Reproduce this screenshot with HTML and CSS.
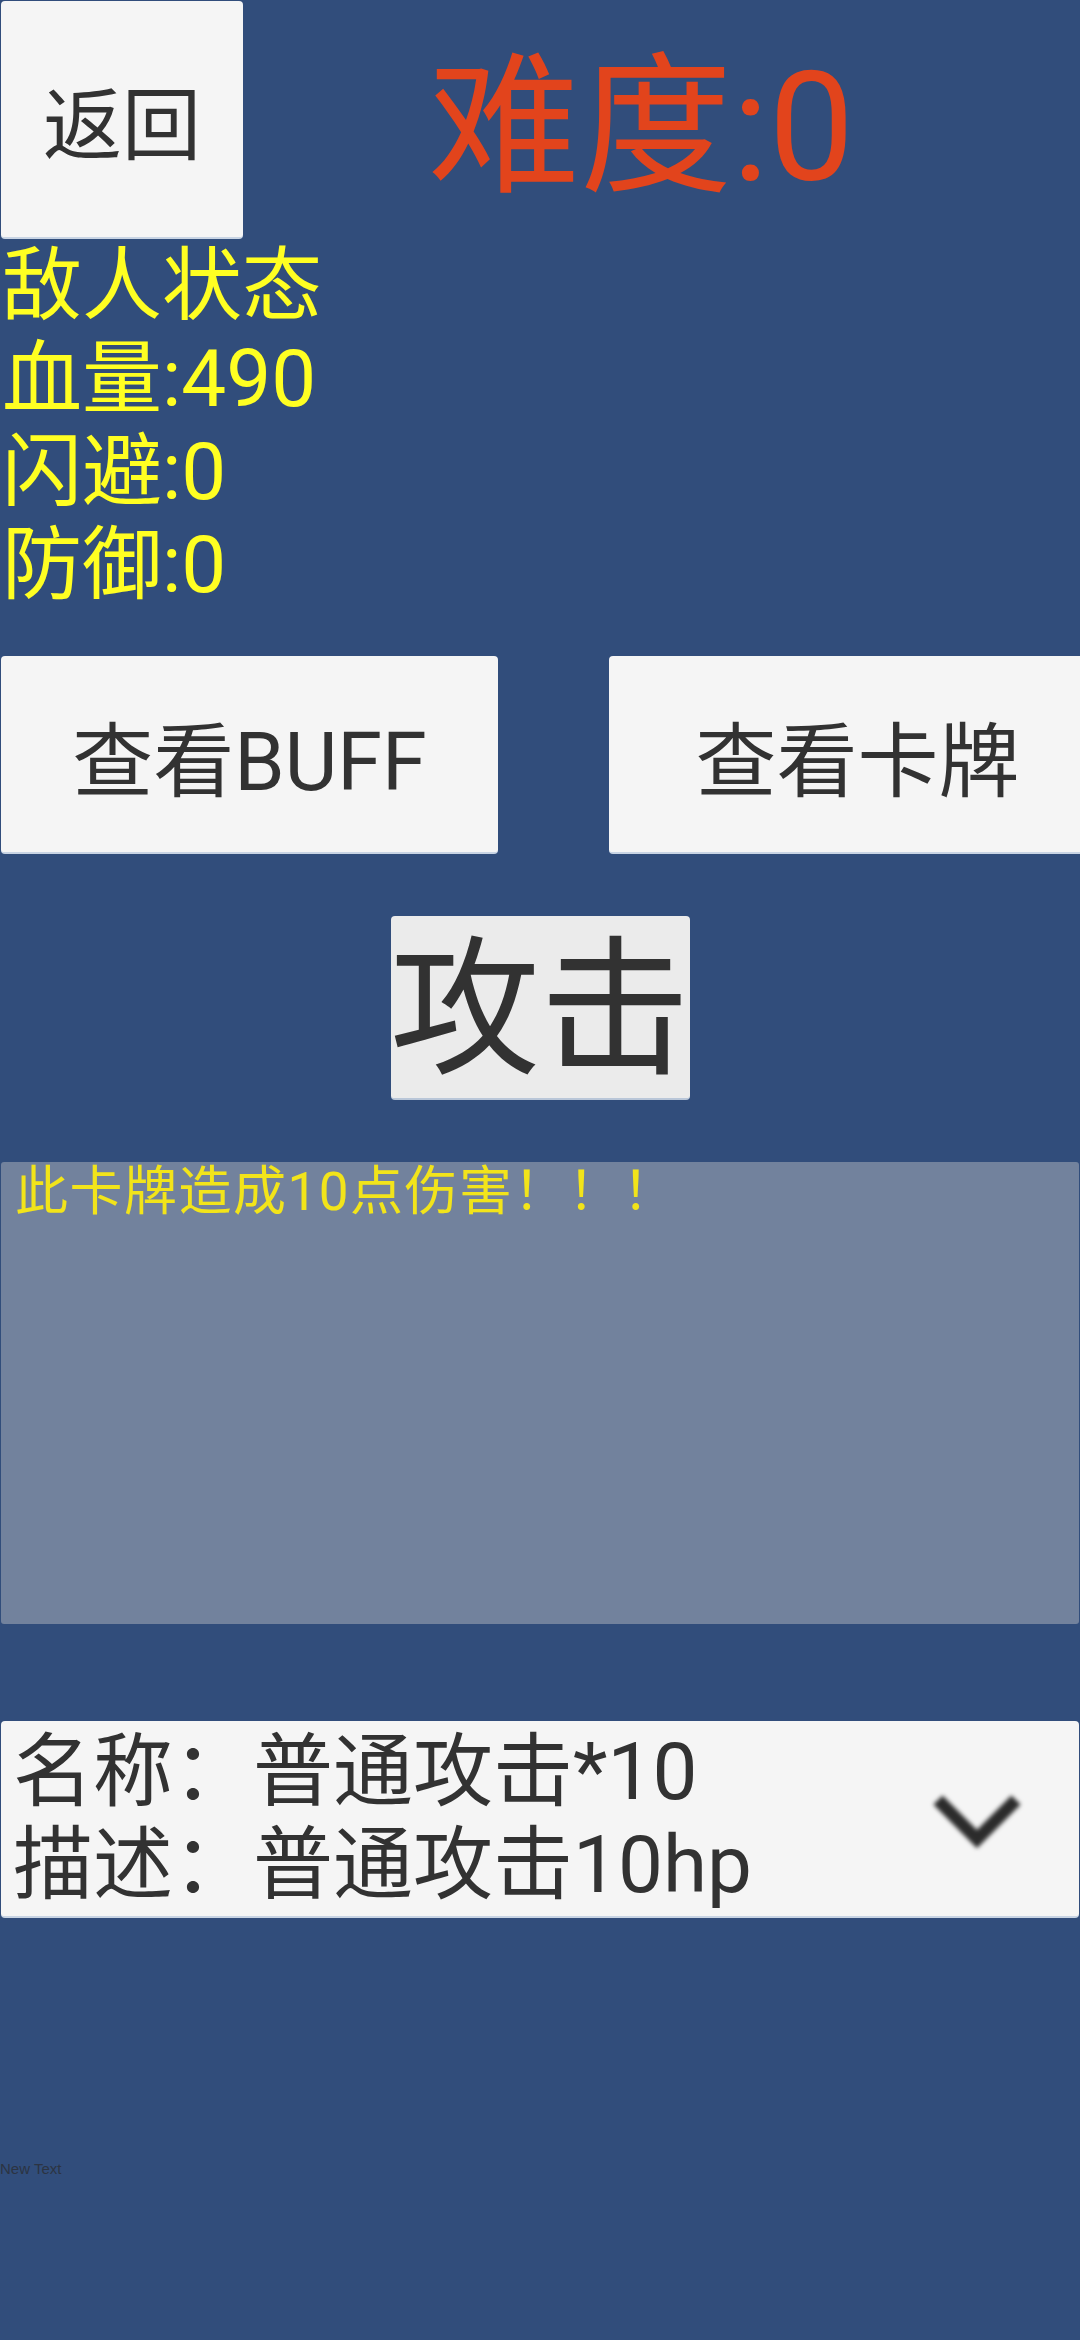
FILE: index.html
```html
<!DOCTYPE html>
<html>

<head>
    <title> 战斗 </title>
    <link rel="stylesheet" href="styles.css">
</head>

<body>
    <div class="top-row">
        <div class="btn back-btn"> 返回 </div>
        <h1 class="level"> 难度:0 </h1>
    </div>

    <div class="enemy">
        <p class="stat">敌人状态</p>
        <p class="stat">血量:490</p>
        <p class="stat">闪避:0</p>
        <p class="stat">防御:0</p>
    </div>

    <div class="btn-row">
        <div class="btn wide-btn">查看BUFF</div>
        <div class="btn wide-btn">查看卡牌</div>
    </div>

    <div class="attack-row">
        <div class="btn attack-btn">攻击</div>
    </div>

    <div class="info-panel">
        <p class="info-text">此卡牌造成10点伤害！！！</p>
    </div>

    <div class="dropdown">
        <div class="dropdown-label">
            <p>名称：普通攻击*10</p>
            <p>描述：普通攻击10hp</p>
        </div>
        <svg class="arrow" width="110" height="70" viewBox="0 0 110 70">
            <polyline points="16,16 55,55 94,16" fill="none" stroke="#2b2b2b" stroke-width="13" />
        </svg>
    </div>

    <p class="new-text">New Text</p>
</body>

</html>
```

FILE: styles.css
```css
body {
    background-color: #314d7b;
    font-family: Roboto, "Noto Sans CJK SC", sans-serif;
    margin: 0;
    padding: 0;
    overflow: hidden;
    height: 2340px;
}

p {
    margin: 0;
}

.btn {
    background-color: #f5f5f5;
    color: #323232;
    border-radius: 4px;
    border-bottom: 2px solid #c8d4e4;
    display: flex;
    justify-content: center;
    align-items: center;
    box-sizing: border-box;
    white-space: nowrap;
}

.top-row {
    display: flex;
    align-items: flex-start;
    height: 240px;
}

.back-btn {
    width: 242px;
    height: 238px;
    margin: 1px 0 0 1px;
    font-size: 79px;
}

.level {
    margin: 16px 0 0 185px;
    font-weight: normal;
    font-size: 152px;
    line-height: 224px;
    color: #e2441c;
    white-space: nowrap;
}

.enemy {
    padding-left: 2px;
}

.stat {
    color: #ffff22;
    font-size: 80px;
    line-height: 93px;
    height: 93px;
    white-space: nowrap;
}

.btn-row {
    display: flex;
    gap: 111px;
    margin-top: 44px;
    padding-left: 1px;
    width: 1200px;
}

.wide-btn {
    width: 497px;
    height: 198px;
    font-size: 81px;
    flex-shrink: 0;
}

.attack-row {
    display: flex;
    justify-content: center;
    margin-top: 62px;
}

.attack-btn {
    width: 299px;
    height: 184px;
    padding-top: 8px;
    background-color: #ebebeb;
    font-size: 150px;
    line-height: 1;
    border-bottom-color: #b9c6d8;
}

.info-panel {
    margin: 62px 1px 0 1px;
    height: 462px;
    background-color: #72829d;
    border-radius: 3px;
    padding: 0 14px;
    box-sizing: border-box;
}

.info-text {
    color: #f2e41a;
    font-size: 53px;
    line-height: 60px;
    letter-spacing: 1.5px;
}

.dropdown {
    margin: 97px 1px 0 1px;
    height: 197px;
    background-color: #f5f5f5;
    border-radius: 4px;
    border-bottom: 2px solid #c8d4e4;
    display: flex;
    align-items: center;
    justify-content: space-between;
    box-sizing: border-box;
}

.dropdown-label {
    padding-left: 12px;
    color: #323232;
    font-size: 80px;
    line-height: 93px;
    white-space: nowrap;
}

.arrow {
    margin-right: 47px;
    filter: blur(2px);
}

.new-text {
    margin-top: 242px;
    color: #2c3442;
    font-size: 15px;
    font-family: "Liberation Sans", Arial, sans-serif;
}
```
